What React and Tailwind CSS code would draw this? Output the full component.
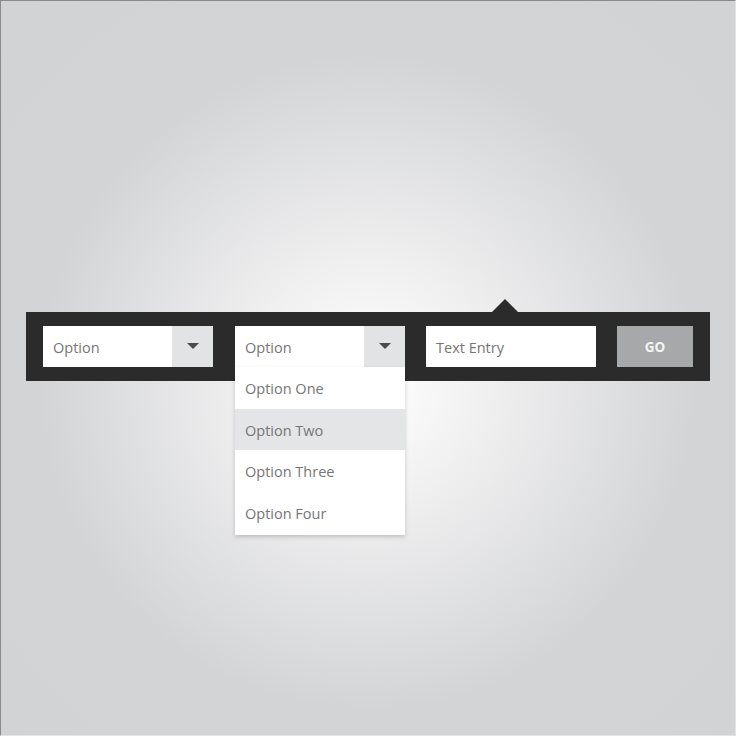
// Search bar with two selects, a text entry and a GO button; second select is open.
const font = { fontFamily: '"Open Sans", "Liberation Sans", sans-serif' };

function Caret() {
  return (
    <svg width="12" height="6" viewBox="0 0 12 6" className="block">
      <path d="M0 0 H12 L6 6 Z" fill="#4a4a4a" />
    </svg>
  );
}

function Select({ label, children }) {
  return (
    <div className="relative w-[170px] h-[41px] bg-white flex">
      <div className="flex-1 flex items-center pl-[10px] pt-[3px] text-[14.5px] text-[#767676]">{label}</div>
      <div className="w-[41px] h-full bg-[#e2e3e4] flex items-center justify-center pb-[2px]">
        <Caret />
      </div>
      {children}
    </div>
  );
}

const options = ["Option One", "Option Two", "Option Three", "Option Four"];

export default function App() {
  return (
    <div
      style={font}
      className="w-[736px] h-[736px] border-l border-t border-l-[#8a8a8a] border-t-[#8a8a8a] border-r border-b border-r-[#e4e4e4] border-b-[#e4e4e4] bg-[radial-gradient(circle_at_50%_52%,#ffffff_0%,#eeeeef_25%,#d3d4d6_62%,#d2d3d5_100%)] pt-[311px] pl-[25px]"
    >
      <div className="relative w-[684px] h-[69px] bg-[#2b2b2b] flex items-center pl-[17px] pr-[17px]">
        {/* pointer notch on top of the bar */}
        <svg width="28" height="14" viewBox="0 0 28 14" className="absolute left-[465px] top-[-13px]">
          <path d="M0 14 L14 0 L28 14 Z" fill="#2b2b2b" />
        </svg>

        <Select label="Option" />
        <div className="w-[22px]" />
        <Select label="Option">
          <ul className="absolute left-0 top-[41px] w-[170px] bg-white shadow-[0_2px_4px_rgba(0,0,0,0.18)] pb-[2px] z-10">
            {options.map((o, i) => (
              <li
                key={o}
                className={`h-[41.5px] flex items-center pl-[10px] pt-[3px] text-[14.5px] text-[#767676] ${i === 1 ? "bg-[#e4e5e6]" : ""}`}
              >
                {o}
              </li>
            ))}
          </ul>
        </Select>
        <div className="w-[21px]" />
        <div className="w-[170px] h-[41px] bg-white flex items-center pl-[10px] pt-[3px] text-[14.5px] text-[#767676]">
          Text Entry
        </div>
        <div className="w-[21px]" />
        <button className="w-[76px] h-[41px] bg-[#a7a8aa] text-[#f4f4f4] text-[13.5px] font-bold pt-[1px]">
          GO
        </button>
      </div>
    </div>
  );
}
